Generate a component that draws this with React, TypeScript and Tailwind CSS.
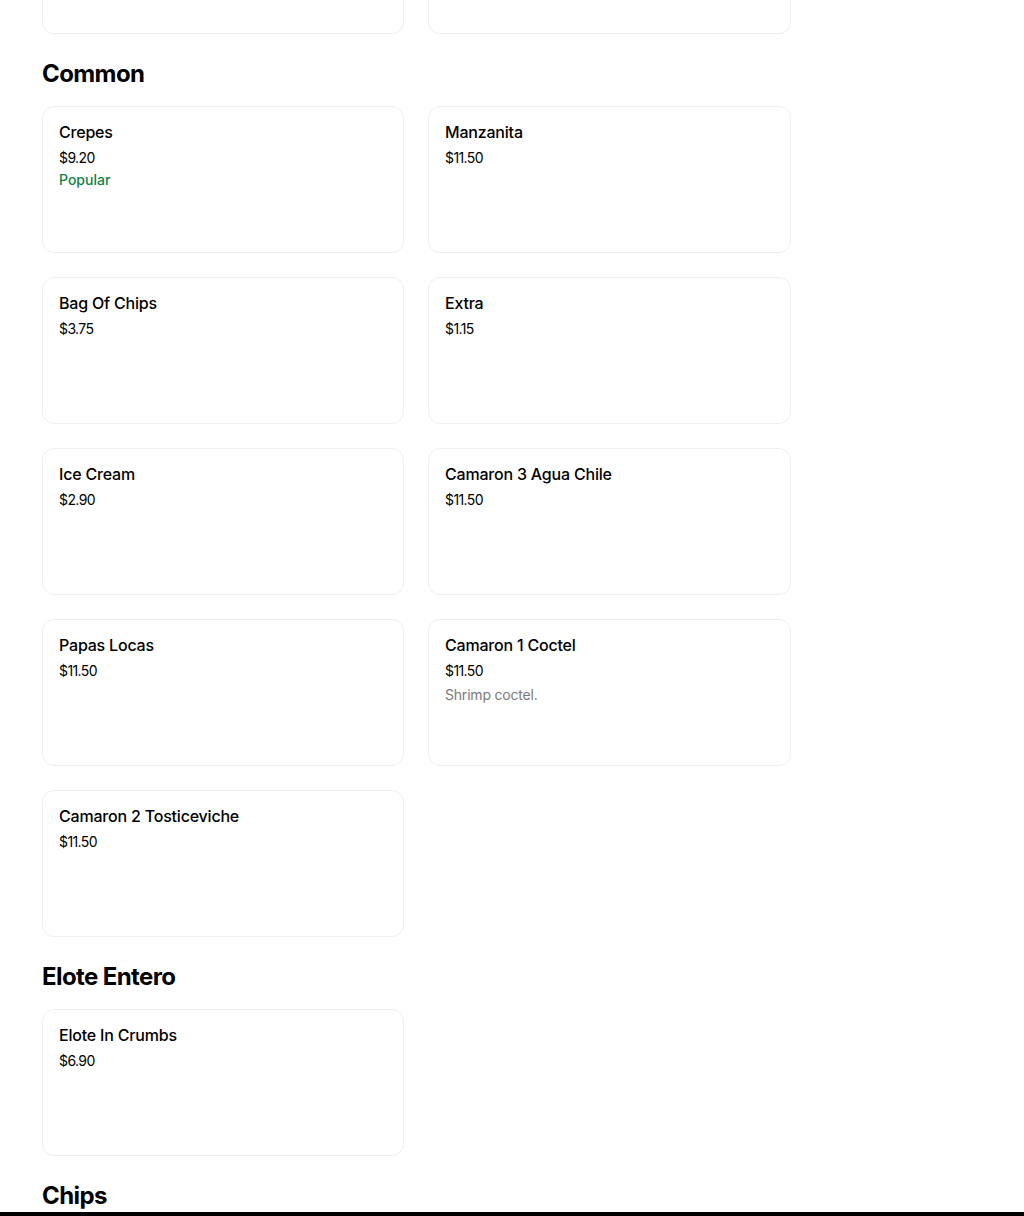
type Item = { name: string; price: string; popular?: boolean; desc?: string };

const COMMON: Item[] = [
  { name: 'Crepes', price: '$9.20', popular: true },
  { name: 'Manzanita', price: '$11.50' },
  { name: 'Bag Of Chips', price: '$3.75' },
  { name: 'Extra', price: '$1.15' },
  { name: 'Ice Cream', price: '$2.90' },
  { name: 'Camaron 3 Agua Chile', price: '$11.50' },
  { name: 'Papas Locas', price: '$11.50' },
  { name: 'Camaron 1 Coctel', price: '$11.50', desc: 'Shrimp coctel.' },
  { name: 'Camaron 2 Tosticeviche', price: '$11.50' },
];

const ELOTE: Item[] = [{ name: 'Elote In Crumbs', price: '$6.90' }];

function ItemCard({ name, price, popular, desc }: Item) {
  return (
    <div className="h-[147px] rounded-xl border border-[#efefef] bg-white px-4 pt-[15px]">
      <div className="text-[16px] leading-5 font-medium tracking-[-0.2px] text-black">{name}</div>
      <div className="mt-[6px] text-[14px] leading-5 tracking-[-0.6px] text-black">{price}</div>
      {popular && <div className="mt-[2px] text-[14px] leading-5 font-medium text-[#0e8345]">Popular</div>}
      {desc && <div className="mt-1 text-[14px] leading-5 tracking-[-0.2px] text-[#7a7a7a]">{desc}</div>}
    </div>
  );
}

function Section({ title, items }: { title: string; items: Item[] }) {
  return (
    <section className="mt-6">
      <h2 className="h-8 text-[24px] leading-8 font-bold tracking-[-0.6px] text-black">{title}</h2>
      <div className="mt-4 grid grid-cols-[362px_363px] gap-6">
        {items.map(it => <ItemCard key={it.name} {...it} />)}
      </div>
    </section>
  );
}

export default function App() {
  return (
    <div className="min-h-[1216px] bg-white" style={{ fontFamily: 'Inter, "Noto Sans", sans-serif' }}>
      <div className="w-[791px] pl-[42px]">
        {/* tail of the previous section */}
        <div className="grid grid-cols-[362px_363px] gap-6">
          <div className="h-[34px] rounded-b-xl border border-t-0 border-[#efefef]" />
          <div className="h-[34px] rounded-b-xl border border-t-0 border-[#efefef]" />
        </div>

        <Section title="Common" items={COMMON} />
        <Section title="Elote Entero" items={ELOTE} />

        <section className="mt-6">
          <h2 className="h-8 text-[24px] leading-8 font-bold tracking-[-0.6px] text-black">Chips</h2>
        </section>
      </div>
      <div className="h-1 bg-black" />
    </div>
  );
}
